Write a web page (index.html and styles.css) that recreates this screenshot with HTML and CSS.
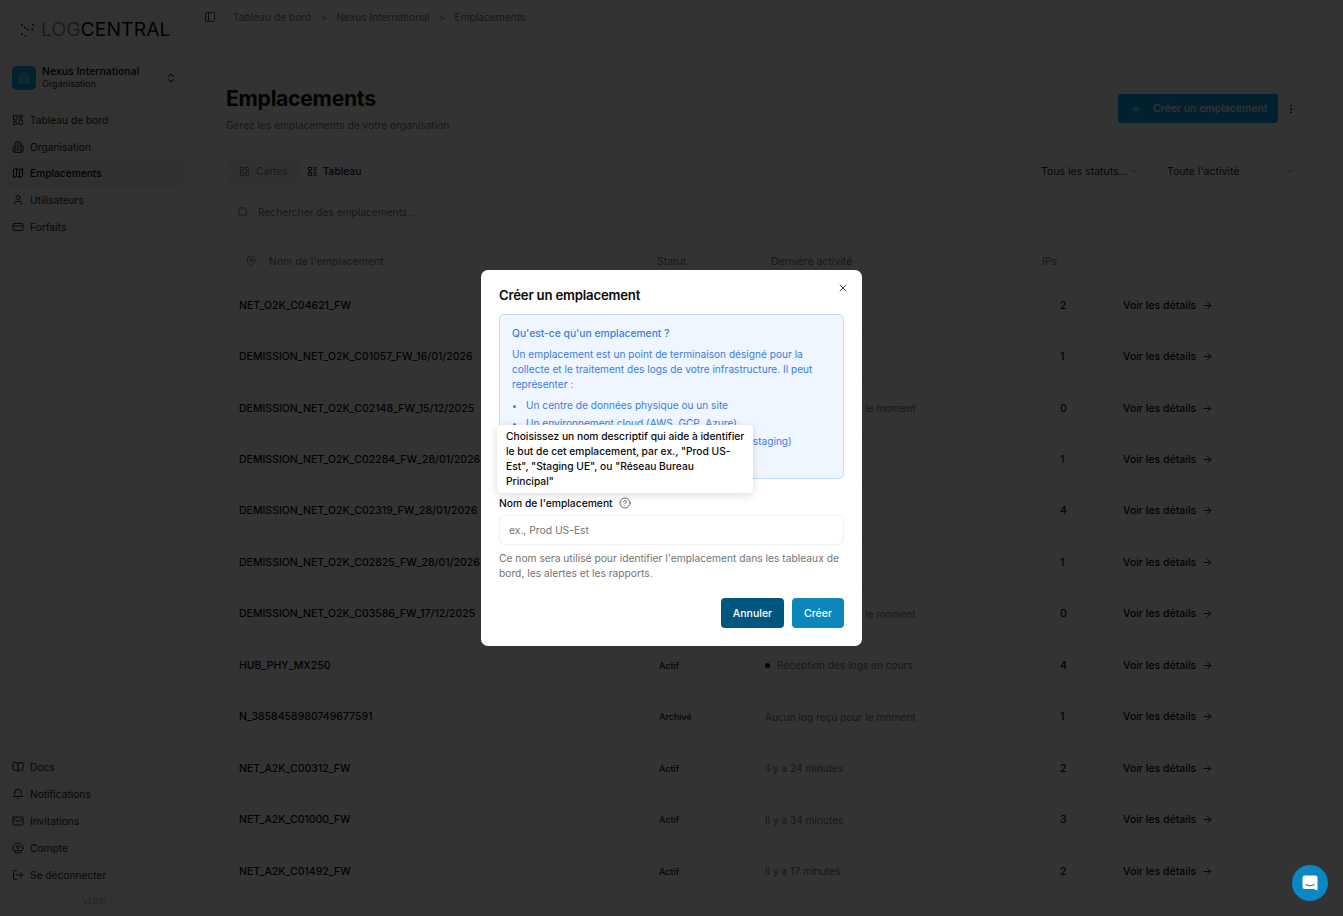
FILE: index.html
```html
<!DOCTYPE html>
<html lang="fr">
<head>
    <meta charset="UTF-8">
    <title>Emplacements - LogCentral</title>
    <link rel="stylesheet" href="styles.css">
</head>
<body>
    <svg class="sprite" xmlns="http://www.w3.org/2000/svg">
        <symbol id="i-dash" viewBox="0 0 24 24"><rect x="3" y="3" width="7" height="9" rx="1"/><rect x="14" y="3" width="7" height="5" rx="1"/><rect x="14" y="12" width="7" height="9" rx="1"/><rect x="3" y="16" width="7" height="5" rx="1"/></symbol>
        <symbol id="i-building" viewBox="0 0 24 24"><path d="M6 22V4a2 2 0 0 1 2-2h8a2 2 0 0 1 2 2v18z"/><path d="M6 12H4a2 2 0 0 0-2 2v6a2 2 0 0 0 2 2h2"/><path d="M18 9h2a2 2 0 0 1 2 2v9a2 2 0 0 1-2 2h-2"/><path d="M10 6h4M10 10h4M10 14h4M10 18h4"/></symbol>
        <symbol id="i-map" viewBox="0 0 24 24"><path d="M3 6v15l6-3 6 3 6-3V3l-6 3-6-3z"/><path d="M9 3v15M15 6v15"/></symbol>
        <symbol id="i-user" viewBox="0 0 24 24"><path d="M19 21v-2a4 4 0 0 0-4-4H9a4 4 0 0 0-4 4v2"/><circle cx="12" cy="7" r="4"/></symbol>
        <symbol id="i-card" viewBox="0 0 24 24"><rect x="2" y="5" width="20" height="14" rx="2"/><path d="M2 10h20"/></symbol>
        <symbol id="i-book" viewBox="0 0 24 24"><path d="M12 7v14"/><path d="M3 18a1 1 0 0 1-1-1V4a1 1 0 0 1 1-1h5a4 4 0 0 1 4 4 4 4 0 0 1 4-4h5a1 1 0 0 1 1 1v13a1 1 0 0 1-1 1h-6a3 3 0 0 0-3 3 3 3 0 0 0-3-3z"/></symbol>
        <symbol id="i-bell" viewBox="0 0 24 24"><path d="M6 8a6 6 0 0 1 12 0c0 7 3 9 3 9H3s3-2 3-9"/><path d="M10.3 21a1.94 1.94 0 0 0 3.4 0"/></symbol>
        <symbol id="i-mail" viewBox="0 0 24 24"><rect x="2" y="4" width="20" height="16" rx="2"/><path d="m22 7-10 6L2 7"/></symbol>
        <symbol id="i-account" viewBox="0 0 24 24"><circle cx="12" cy="12" r="10"/><circle cx="12" cy="10" r="3"/><path d="M7 20.7V19a2 2 0 0 1 2-2h6a2 2 0 0 1 2 2v1.7"/></symbol>
        <symbol id="i-logout" viewBox="0 0 24 24"><path d="M9 21H5a2 2 0 0 1-2-2V5a2 2 0 0 1 2-2h4"/><path d="m16 17 5-5-5-5"/><path d="M21 12H9"/></symbol>
        <symbol id="i-panel" viewBox="0 0 24 24"><rect x="3" y="3" width="18" height="18" rx="2"/><path d="M9 3v18"/></symbol>
        <symbol id="i-updown" viewBox="0 0 24 24"><path d="m7 15 5 5 5-5"/><path d="m7 9 5-5 5 5"/></symbol>
        <symbol id="i-plus" viewBox="0 0 24 24"><path d="M5 12h14M12 5v14"/></symbol>
        <symbol id="i-more" viewBox="0 0 24 24"><circle cx="12" cy="5" r="1"/><circle cx="12" cy="12" r="1"/><circle cx="12" cy="19" r="1"/></symbol>
        <symbol id="i-grid" viewBox="0 0 24 24"><rect x="3" y="3" width="7" height="7" rx="1"/><rect x="14" y="3" width="7" height="7" rx="1"/><rect x="14" y="14" width="7" height="7" rx="1"/><rect x="3" y="14" width="7" height="7" rx="1"/></symbol>
        <symbol id="i-table" viewBox="0 0 24 24"><rect x="3" y="3" width="7" height="7" rx="1"/><rect x="3" y="14" width="7" height="7" rx="1"/><path d="M14 4h7M14 9h7M14 15h7M14 20h7"/></symbol>
        <symbol id="i-search" viewBox="0 0 24 24"><circle cx="11" cy="11" r="8"/><path d="m21 21-4.3-4.3"/></symbol>
        <symbol id="i-pin" viewBox="0 0 24 24"><path d="M20 10c0 5-5.5 10.200-7.400 11.800a1 1 0 0 1-1.200 0C9.500 20.200 4 15 4 10a8 8 0 0 1 16 0"/><circle cx="12" cy="10" r="3"/></symbol>
        <symbol id="i-arrow" viewBox="0 0 24 24"><path d="M5 12h14"/><path d="m12 5 7 7-7 7"/></symbol>
        <symbol id="i-chevron" viewBox="0 0 24 24"><path d="m6 9 6 6 6-6"/></symbol>
        <symbol id="i-close" viewBox="0 0 24 24"><path d="M18 6 6 18M6 6l12 12"/></symbol>
        <symbol id="i-help" viewBox="0 0 24 24"><circle cx="12" cy="12" r="10"/><path d="M9.100 9a3 3 0 0 1 5.800 1c0 2-3 3-3 3"/><path d="M12 17h.01"/></symbol>
    </svg>

    <div class="app">
        <aside class="sidebar">
            <div class="logo">
                <svg class="logo-mark" viewBox="0 0 16 16"><circle cx="2" cy="3" r="1"/><circle cx="8" cy="8" r="1"/><circle cx="14" cy="3" r="1"/><circle cx="2" cy="13" r="1"/><circle cx="6" cy="15" r="1"/><circle cx="13" cy="8" r="1"/><circle cx="5" cy="6" r="1"/></svg>
                <span class="logo-text"><span class="logo-light">LOG</span>CENTRAL</span>
            </div>
            <div class="org">
                <span class="org-icon"><svg class="icon"><use href="#i-building"/></svg></span>
                <span class="org-text">
                    <strong>Nexus International</strong>
                    <small>Organisation</small>
                </span>
                <svg class="icon org-switch"><use href="#i-updown"/></svg>
            </div>
            <nav class="nav">
                <a class="nav-item"><svg class="icon"><use href="#i-dash"/></svg>Tableau de bord</a>
                <a class="nav-item"><svg class="icon"><use href="#i-building"/></svg>Organisation</a>
                <a class="nav-item active"><svg class="icon"><use href="#i-map"/></svg>Emplacements</a>
                <a class="nav-item"><svg class="icon"><use href="#i-user"/></svg>Utilisateurs</a>
                <a class="nav-item"><svg class="icon"><use href="#i-card"/></svg>Forfaits</a>
            </nav>
            <nav class="nav nav-bottom">
                <a class="nav-item"><svg class="icon"><use href="#i-book"/></svg>Docs</a>
                <a class="nav-item"><svg class="icon"><use href="#i-bell"/></svg>Notifications</a>
                <a class="nav-item"><svg class="icon"><use href="#i-mail"/></svg>Invitations</a>
                <a class="nav-item"><svg class="icon"><use href="#i-account"/></svg>Compte</a>
                <a class="nav-item"><svg class="icon"><use href="#i-logout"/></svg>Se déconnecter</a>
            </nav>
            <div class="version">v1.0.11</div>
        </aside>

        <main class="main">
            <div class="topbar">
                <svg class="icon"><use href="#i-panel"/></svg>
                <div class="crumbs">
                    <span>Tableau de bord</span><i>&gt;</i>
                    <span>Nexus International</span><i>&gt;</i>
                    <span>Emplacements</span>
                </div>
            </div>

            <div class="content">
                <div class="page-head">
                    <div>
                        <h1>Emplacements</h1>
                        <p>Gérez les emplacements de votre organisation</p>
                    </div>
                    <div class="page-actions">
                        <button class="btn-create"><svg class="icon"><use href="#i-plus"/></svg>Créer un emplacement</button>
                        <svg class="icon"><use href="#i-more"/></svg>
                    </div>
                </div>

                <div class="toolbar">
                    <div class="tabs">
                        <span class="tab"><svg class="icon"><use href="#i-grid"/></svg>Cartes</span>
                        <span class="tab current"><svg class="icon"><use href="#i-table"/></svg>Tableau</span>
                    </div>
                    <div class="filters">
                        <span class="filter filter-status">Tous les statuts...<svg class="icon"><use href="#i-chevron"/></svg></span>
                        <span class="filter filter-activity">Toute l'activité<svg class="icon"><use href="#i-chevron"/></svg></span>
                    </div>
                </div>

                <div class="search"><svg class="icon"><use href="#i-search"/></svg>Rechercher des emplacements...</div>

                <div class="table">
                    <div class="row row-head">
                        <span class="cell-name"><svg class="icon"><use href="#i-pin"/></svg>Nom de l'emplacement</span>
                        <span>Statut</span>
                        <span>Dernière activité</span>
                        <span>IPs</span>
                        <span></span>
                    </div>
                    <div class="row"><span class="cell-name">NET_O2K_C04621_FW</span><span class="badge">Actif</span><span class="activity">Il y a 12 minutes</span><span class="ips">2</span><a class="details">Voir les détails<svg class="icon"><use href="#i-arrow"/></svg></a></div>
                    <div class="row"><span class="cell-name">DEMISSION_NET_O2K_C01057_FW_16/01/2026</span><span class="badge">Archivé</span><span class="activity">Il y a 3 jours</span><span class="ips">1</span><a class="details">Voir les détails<svg class="icon"><use href="#i-arrow"/></svg></a></div>
                    <div class="row"><span class="cell-name">DEMISSION_NET_O2K_C02148_FW_15/12/2025</span><span class="badge">Archivé</span><span class="activity">Aucun log reçu pour le moment</span><span class="ips">0</span><a class="details">Voir les détails<svg class="icon"><use href="#i-arrow"/></svg></a></div>
                    <div class="row"><span class="cell-name">DEMISSION_NET_O2K_C02284_FW_28/01/2026</span><span class="badge">Archivé</span><span class="activity">Il y a 5 jours</span><span class="ips">1</span><a class="details">Voir les détails<svg class="icon"><use href="#i-arrow"/></svg></a></div>
                    <div class="row"><span class="cell-name">DEMISSION_NET_O2K_C02319_FW_28/01/2026</span><span class="badge">Archivé</span><span class="activity">Il y a 5 jours</span><span class="ips">4</span><a class="details">Voir les détails<svg class="icon"><use href="#i-arrow"/></svg></a></div>
                    <div class="row"><span class="cell-name">DEMISSION_NET_O2K_C02825_FW_28/01/2026</span><span class="badge">Archivé</span><span class="activity">Il y a 5 jours</span><span class="ips">1</span><a class="details">Voir les détails<svg class="icon"><use href="#i-arrow"/></svg></a></div>
                    <div class="row"><span class="cell-name">DEMISSION_NET_O2K_C03586_FW_17/12/2025</span><span class="badge">Archivé</span><span class="activity">Aucun log reçu pour le moment</span><span class="ips">0</span><a class="details">Voir les détails<svg class="icon"><use href="#i-arrow"/></svg></a></div>
                    <div class="row"><span class="cell-name">HUB_PHY_MX250</span><span class="badge">Actif</span><span class="activity live"><b></b>Réception des logs en cours</span><span class="ips">4</span><a class="details">Voir les détails<svg class="icon"><use href="#i-arrow"/></svg></a></div>
                    <div class="row"><span class="cell-name">N_3858458980749677591</span><span class="badge">Archivé</span><span class="activity">Aucun log reçu pour le moment</span><span class="ips">1</span><a class="details">Voir les détails<svg class="icon"><use href="#i-arrow"/></svg></a></div>
                    <div class="row"><span class="cell-name">NET_A2K_C00312_FW</span><span class="badge">Actif</span><span class="activity">Il y a 24 minutes</span><span class="ips">2</span><a class="details">Voir les détails<svg class="icon"><use href="#i-arrow"/></svg></a></div>
                    <div class="row"><span class="cell-name">NET_A2K_C01000_FW</span><span class="badge">Actif</span><span class="activity">Il y a 34 minutes</span><span class="ips">3</span><a class="details">Voir les détails<svg class="icon"><use href="#i-arrow"/></svg></a></div>
                    <div class="row"><span class="cell-name">NET_A2K_C01492_FW</span><span class="badge">Actif</span><span class="activity">Il y a 17 minutes</span><span class="ips">2</span><a class="details">Voir les détails<svg class="icon"><use href="#i-arrow"/></svg></a></div>
                </div>
            </div>
        </main>
    </div>

    <div class="overlay">
        <div class="modal">
            <svg class="icon modal-close"><use href="#i-close"/></svg>
            <h2>Créer un emplacement</h2>
            <div class="info">
                <h3>Qu'est-ce qu'un emplacement ?</h3>
                <p>Un emplacement est un point de terminaison désigné pour la collecte et le traitement des logs de votre infrastructure. Il peut représenter :</p>
                <ul>
                    <li>Un centre de données physique ou un site</li>
                    <li>Un environnement cloud (AWS, GCP, Azure)</li>
                    <li>Un environnement de déploiement (production/staging)</li>
                </ul>
            </div>
            <div class="tooltip">Choisissez un nom descriptif qui aide à identifier le but de cet emplacement, par ex., "Prod US-Est", "Staging UE", ou "Réseau Bureau<br>Principal"</div>
            <label class="field-label" for="locName">Nom de l'emplacement <svg class="icon"><use href="#i-help"/></svg></label>
            <input type="text" id="locName" class="field" placeholder="ex., Prod US-Est">
            <p class="field-help">Ce nom sera utilisé pour identifier l'emplacement dans les tableaux de bord, les alertes et les rapports.</p>
            <div class="modal-actions">
                <button class="btn-cancel">Annuler</button>
                <button class="btn-submit">Créer</button>
            </div>
        </div>
    </div>

    <button class="chat">
        <svg viewBox="0 0 24 24"><path d="M5 2h14a3 3 0 0 1 3 3v17l-5-2H5a3 3 0 0 1-3-3V5a3 3 0 0 1 3-3z" fill="#fff"/><path d="M6.500 14c3.500 2.200 7.500 2.200 11 0" fill="none" stroke="#0b87c4" stroke-width="1.500" stroke-linecap="round"/></svg>
    </button>
</body>
</html>
```

FILE: styles.css
```css
* {
    box-sizing: border-box;
}
html, body {
    height: 100%;
}
body {
    margin: 0;
    overflow: hidden;
    font-family: 'Inter', 'Liberation Sans', sans-serif;
    font-size: 10.5px;
    color: #0a0a0a;
    background-color: #ffffff;
}
.sprite {
    display: none;
}
.icon {
    width: 12px;
    height: 12px;
    flex-shrink: 0;
    fill: none;
    stroke: currentColor;
    stroke-width: 2;
    stroke-linecap: round;
    stroke-linejoin: round;
}
.app {
    display: flex;
    height: 100%;
}

/* Sidebar */
.sidebar {
    width: 190px;
    flex-shrink: 0;
    display: flex;
    flex-direction: column;
    padding: 19px 0 10px;
    background-color: #fafafa;
    border-right: 1px solid #e5e5e5;
}
.logo {
    display: flex;
    align-items: center;
    gap: 6px;
    padding-left: 20px;
    height: 20px;
}
.logo-mark {
    width: 15px;
    height: 15px;
    fill: #0a0a0a;
}
.logo-text {
    font-size: 19.300px;
    letter-spacing: 0.1px;
    color: #0a0a0a;
}
.logo-light {
    color: #737373;
    font-weight: 300;
}
.org {
    display: flex;
    align-items: center;
    gap: 6px;
    margin: 26px 12px 0;
    height: 26px;
}
.org-icon {
    width: 24px;
    height: 24px;
    border-radius: 5px;
    display: flex;
    align-items: center;
    justify-content: center;
    background-color: #0ea5e9;
    color: #9fdcf7;
}
.org-text {
    display: flex;
    flex-direction: column;
    flex: 1;
    line-height: 12.500px;
}
.org-text strong {
    font-weight: 500;
}
.org-text small {
    font-size: 9px;
    color: #262626;
}
.nav {
    display: flex;
    flex-direction: column;
    margin-top: 15.500px;
}
.nav-item {
    display: flex;
    align-items: center;
    gap: 6px;
    height: 26.800px;
    margin: 0 6px;
    padding-left: 6px;
    border-radius: 5px;
    font-size: 10.200px;
    color: #262626;
}
.nav-item.active {
    background-color: #f0f0f0;
    font-weight: 500;
    color: #0a0a0a;
}
.nav-bottom {
    margin-top: auto;
}
.version {
    text-align: center;
    font-size: 8px;
    color: #a3a3a3;
    margin: 8px 0 0;
}

/* Main */
.main {
    flex: 1;
    min-width: 0;
    display: flex;
    flex-direction: column;
}
.topbar {
    display: flex;
    align-items: center;
    gap: 17px;
    height: 34px;
    padding-left: 14px;
    flex-shrink: 0;
    color: #404040;
}
.crumbs {
    display: flex;
    align-items: center;
    gap: 9.600px;
    font-size: 10.200px;
    color: #737373;
}
.crumbs i {
    font-style: normal;
    font-size: 9px;
}
.content {
    padding: 50px 43px 0 36px;
}
.page-head {
    display: flex;
    justify-content: space-between;
    align-items: flex-start;
}
h1 {
    margin: 0;
    font-size: 21.200px;
    font-weight: 700;
    line-height: 28px;
    letter-spacing: -0.3px;
}
.page-head p {
    margin: 7px 0 0;
    font-size: 10.200px;
    color: #737373;
}
.page-actions {
    display: flex;
    align-items: center;
    gap: 7px;
    margin: 10px 3px 0 0;
}
.btn-create {
    display: flex;
    align-items: center;
    gap: 11px;
    height: 29px;
    width: 160px;
    padding: 0 12px;
    border: none;
    border-radius: 3px;
    font: inherit;
    font-weight: 500;
    white-space: nowrap;
    color: #ffffff;
    background-color: #0ea5e9;
}
.toolbar {
    display: flex;
    justify-content: space-between;
    align-items: center;
    margin-top: 27px;
}
.tabs {
    display: flex;
    align-items: center;
    height: 26px;
    padding: 0 2px;
    border-radius: 5px;
    background-color: #f5f5f5;
}
.tab {
    display: flex;
    align-items: center;
    gap: 6px;
    height: 22px;
    padding: 0 11px;
    border-radius: 4px;
    font-size: 10.200px;
    color: #737373;
}
.tab .icon {
    width: 11px;
    height: 11px;
}
.tab.current {
    gap: 5px;
    color: #0a0a0a;
    font-weight: 500;
    background-color: #ffffff;
    padding: 0 11px 0 8px;
}
.filters {
    display: flex;
    align-items: center;
    margin-right: 5px;
}
.filter {
    display: flex;
    align-items: center;
    justify-content: space-between;
    color: #262626;
}
.filter .icon {
    width: 10px;
    height: 10px;
    color: #737373;
}
.filter-status {
    width: 126px;
    padding-right: 28px;
}
.filter-activity {
    width: 128px;
}
.search {
    display: flex;
    align-items: center;
    gap: 9px;
    height: 30px;
    margin-top: 13px;
    padding-left: 10px;
    border: 1px solid #f0f0f0;
    border-radius: 5px;
    font-size: 10.200px;
    color: #737373;
}
.table {
    margin-top: 15px;
    border-top: 1px solid #f0f0f0;
}
.row {
    display: grid;
    grid-template-columns: 425px 114px 271px 87px 1fr;
    align-items: center;
    height: 51.450px;
    border-bottom: 1px solid #f0f0f0;
}
.row-head {
    height: 37px;
    color: #737373;
}
.row-head span:nth-child(n+2) {
    padding-left: 6px;
}
.cell-name {
    display: flex;
    align-items: center;
    gap: 6px;
    padding-left: 13px;
    font-weight: 500;
    white-space: nowrap;
}
.row-head .cell-name {
    gap: 12px;
    padding-left: 19px;
    font-weight: 400;
}
.badge {
    padding-left: 8px;
    font-size: 9px;
    font-weight: 500;
    color: #171717;
}
.activity {
    display: flex;
    align-items: center;
    font-size: 10.150px;
    color: #737373;
}
.live b {
    width: 5px;
    height: 5px;
    margin: 0 7px 0 0;
    border-radius: 50%;
    background-color: #171717;
}
.ips {
    padding-left: 24px;
    font-weight: 500;
}
.details {
    display: flex;
    align-items: center;
    gap: 6px;
    font-weight: 500;
}
.details .icon {
    width: 11px;
    height: 11px;
}

/* Modal */
.overlay {
    position: fixed;
    inset: 0;
    display: flex;
    align-items: center;
    justify-content: center;
    background-color: rgba(0, 0, 0, 0.8);
    backdrop-filter: blur(0.6px);
}
.modal {
    position: relative;
    width: 381px;
    height: 376px;
    padding: 18px;
    border-radius: 7px;
    background-color: #ffffff;
}
.modal-close {
    position: absolute;
    top: 12px;
    right: 13px;
    color: #404040;
}
h2 {
    margin: 0;
    font-size: 13.200px;
    font-weight: 600;
    line-height: 14px;
    letter-spacing: -0.2px;
}
.info {
    height: 165px;
    margin-top: 12px;
    padding: 11px 12px;
    border: 1px solid #bfdbfe;
    border-radius: 5px;
    color: #3b7ddd;
    background-color: #eff6ff;
    font-size: 10.150px;
    line-height: 15px;
}
h3 {
    margin: 0;
    font-size: 10.300px;
    font-weight: 500;
}
.info p {
    margin: 6px 0 0;
}
.info ul {
    margin: 4px 0 0;
    padding-left: 14px;
}
.info li {
    line-height: 18px;
}
.tooltip {
    position: absolute;
    top: 155px;
    left: 16px;
    width: 256px;
    height: 68px;
    padding: 4px 4px 0 9px;
    border-radius: 4px;
    background-color: #ffffff;
    box-shadow: 0 2px 8px rgba(0, 0, 0, 0.15);
    font-size: 10.250px;
    font-weight: 500;
    line-height: 15px;
    color: #0a0a0a;
}
.field-label {
    display: flex;
    align-items: center;
    gap: 6px;
    margin-top: 17px;
    font-size: 10.300px;
    font-weight: 500;
    line-height: 14px;
}
.field-label .icon {
    stroke-width: 1.500;
    color: #404040;
}
.field {
    display: block;
    width: 100%;
    height: 30px;
    margin-top: 5px;
    padding: 0 9px;
    border: 1px solid #f0f0f0;
    border-radius: 5px;
    font: inherit;
    font-size: 10.300px;
    outline: none;
}
.field::placeholder {
    color: #737373;
}
.field-help {
    margin: 6px 0 0;
    font-size: 10.250px;
    line-height: 15px;
    color: #737373;
}
.modal-actions {
    display: flex;
    justify-content: flex-end;
    gap: 8px;
    margin-top: 17px;
}
.modal-actions button {
    height: 30px;
    border: none;
    border-radius: 4px;
    font: inherit;
    font-weight: 500;
    color: #ffffff;
}
.btn-cancel {
    width: 63px;
    background-color: #015680;
}
.btn-submit {
    width: 52px;
    background-color: #0b87bb;
}

/* Chat bubble */
.chat {
    position: fixed;
    right: 15px;
    bottom: 15px;
    width: 36px;
    height: 36px;
    padding: 9px;
    border: none;
    border-radius: 50%;
    background-color: #0b87c4;
}
.chat svg {
    display: block;
    width: 100%;
    height: 100%;
}
```
